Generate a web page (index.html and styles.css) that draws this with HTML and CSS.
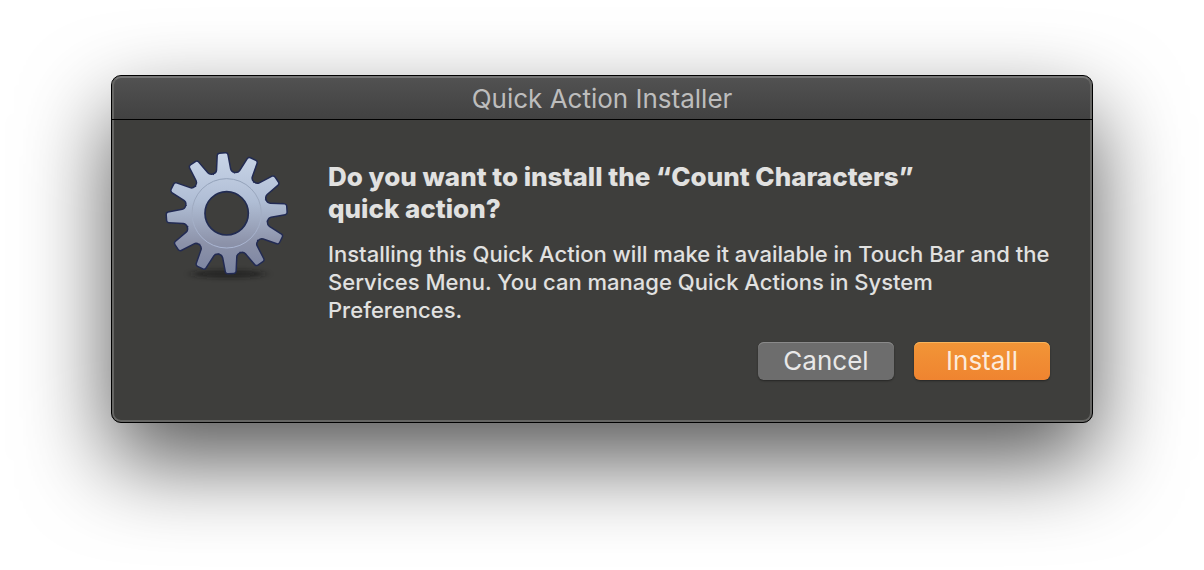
FILE: index.html
```html
<!DOCTYPE html>
<html lang="en">
<head>
<meta charset="utf-8">
<title>Quick Action Installer</title>
<link rel="stylesheet" href="styles.css">
</head>
<body>
<main class="window" role="dialog" aria-labelledby="title">
  <header class="titlebar"><h1 class="title" id="title">Quick Action Installer</h1></header>
  <div class="content">
    <svg class="gear" viewBox="-218 -217 432 432" aria-hidden="true">
      <defs>
        <path id="tooth" d="M-30-119Q-20-123-19-132L-14-175Q-13-179-9-179H9Q13-179 14-175L19-132Q20-123 30-119L0 0Z"/>
        <g id="wheel">
          <use href="#tooth" transform="rotate(-4)"/>
          <use href="#tooth" transform="rotate(26)"/>
          <use href="#tooth" transform="rotate(56)"/>
          <use href="#tooth" transform="rotate(86)"/>
          <use href="#tooth" transform="rotate(116)"/>
          <use href="#tooth" transform="rotate(146)"/>
          <use href="#tooth" transform="rotate(176)"/>
          <use href="#tooth" transform="rotate(206)"/>
          <use href="#tooth" transform="rotate(236)"/>
          <use href="#tooth" transform="rotate(266)"/>
          <use href="#tooth" transform="rotate(296)"/>
          <use href="#tooth" transform="rotate(326)"/>
          <circle r="122"/>
        </g>
        <mask id="cut" maskUnits="userSpaceOnUse" x="-216" y="-216" width="432" height="432">
          <use href="#wheel" fill="#fff"/>
          <circle r="65" fill="#000"/>
        </mask>
        <linearGradient id="steel" x1="0" y1="-180" x2="0" y2="180" gradientUnits="userSpaceOnUse">
          <stop offset="0" stop-color="#c9d5e8"/>
          <stop offset=".4" stop-color="#b0bed5"/>
          <stop offset=".75" stop-color="#8c92a9"/>
          <stop offset="1" stop-color="#7b84a1"/>
        </linearGradient>
        <linearGradient id="ring" x1="0" y1="-108" x2="0" y2="108" gradientUnits="userSpaceOnUse">
          <stop offset="0" stop-color="#91a0b8"/>
          <stop offset=".5" stop-color="#a2adc3"/>
          <stop offset="1" stop-color="#aab6d4"/>
        </linearGradient>
        <filter id="soft" x="-50%" y="-150%" width="200%" height="400%"><feGaussianBlur stdDeviation="14 7"/></filter>
        <filter id="edge"><feGaussianBlur stdDeviation="2"/></filter>
      </defs>
      <ellipse cx="5" cy="182" rx="110" ry="12" fill="#181818" opacity=".6" filter="url(#soft)"/>
      <use href="#wheel" fill="#222c52" stroke="#222c52" stroke-width="9" stroke-linejoin="round" filter="url(#edge)"/>
      <rect x="-190" y="-190" width="380" height="380" fill="url(#steel)" mask="url(#cut)"/>
      <circle r="104" fill="none" stroke="url(#ring)" stroke-width="3"/>
      <circle r="65" fill="#3e3e3c" stroke="#222c52" stroke-width="5"/>
    </svg>
    <div class="message">
      <h2 class="question">Do you want to install the “Count Characters”<br>quick action?</h2>
      <p class="detail">Installing this Quick Action will make it available in Touch Bar and the<br>Services Menu. You can manage Quick Actions in System<br>Preferences.</p>
      <div class="actions">
        <button class="button" type="button">Cancel</button>
        <button class="button primary" type="button">Install</button>
      </div>
    </div>
  </div>
</main>
</body>
</html>
```
FILE: styles.css
```css
* { box-sizing: border-box; }
body {
  margin: 0;
  min-height: 100vh;
  padding: 75px 111px;
  background: #fff;
  font-family: Inter, "Liberation Sans", sans-serif;
}
.window {
  background: #3e3e3c;
  border: 1px solid #000;
  border-radius: 10px;
  overflow: hidden;
  position: relative;
  box-shadow: 0 38px 88px rgba(0, 0, 0, .66);
}
.window::after {
  content: "";
  position: absolute;
  inset: 0;
  border: 2px solid #666664;
  border-top-color: #757575;
  border-radius: 9px;
  pointer-events: none;
}
.titlebar {
  height: 44px;
  display: flex;
  align-items: center;
  justify-content: center;
  padding-top: 2px;
  background: linear-gradient(#525252, #414141);
}
.titlebar::after {
  content: "";
  position: absolute;
  z-index: 1;
  top: 43px;
  left: 0;
  right: 0;
  height: 1px;
  background: #000;
}
.title {
  margin: 0;
  font-size: 26px;
  line-height: 32px;
  font-weight: 400;
  color: #bdbdbd;
}
.content {
  display: flex;
  align-items: flex-start;
  gap: 30px;
  padding: 21px 42px 42px;
}
.gear { width: 144px; height: 144px; flex: none; }
.message { flex: 1; padding-top: 20px; white-space: nowrap; }
.question {
  margin: 0;
  font-size: 26px;
  line-height: 32px;
  font-weight: 800;
  color: #e1e1e0;
}
.detail {
  margin: 15px 0 0;
  font-size: 22px;
  line-height: 28px;
  font-weight: 450;
  color: #e1e1e0;
}
.actions {
  display: flex;
  justify-content: flex-end;
  gap: 20px;
  margin-top: 18px;
}
.button {
  width: 136px;
  height: 38px;
  padding: 0;
  border: 0;
  border-radius: 6px;
  background: #6d6d6d;
  box-shadow: inset 0 1px #8a8a8a, 0 1px 2px rgba(0, 0, 0, .4);
  font: 400 26px/38px Inter, "Liberation Sans", sans-serif;
  color: #e8e8e8;
}
.primary {
  background: linear-gradient(#f29537, #ef8430);
  box-shadow: inset 0 1px #f8b45c, 0 1px 2px rgba(0, 0, 0, .4);
  color: #fcebdc;
}
```
